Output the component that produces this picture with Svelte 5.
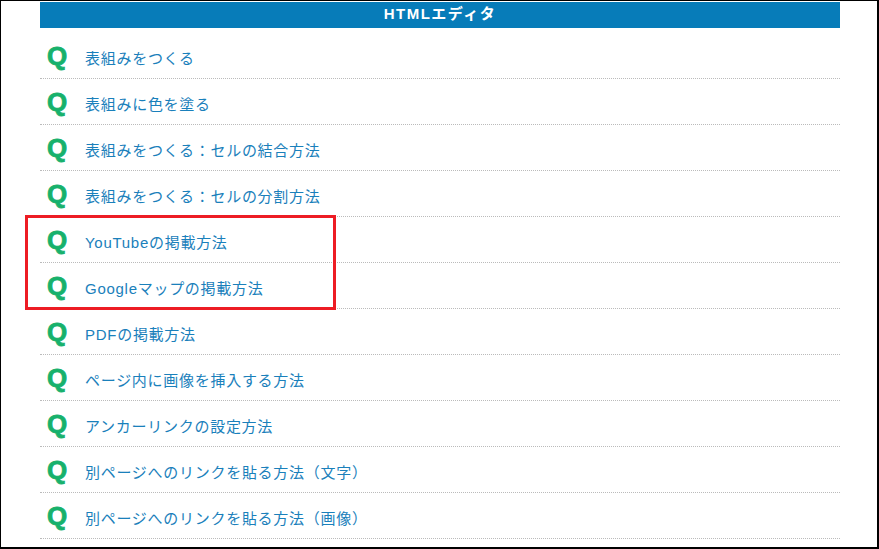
<script lang="ts">
	const questions = [
		'表組みをつくる',
		'表組みに色を塗る',
		'表組みをつくる：セルの結合方法',
		'表組みをつくる：セルの分割方法',
		'YouTubeの掲載方法',
		'Googleマップの掲載方法',
		'PDFの掲載方法',
		'ページ内に画像を挿入する方法',
		'アンカーリンクの設定方法',
		'別ページへのリンクを貼る方法（文字）',
		'別ページへのリンクを貼る方法（画像）',
	];
</script>

<div class="frame">
	<section class="faq">
		<h2>HTMLエディタ</h2>
		<ul>
			{#each questions as q}
				<li>
					<span class="q">Q</span>
					<a href="#top">{q}</a>
				</li>
			{/each}
		</ul>
	</section>
	<div class="highlight"></div>
</div>

<style>
	:global(body) {
		margin: 0;
		background: #fff;
	}

	.frame {
		position: relative;
		box-sizing: border-box;
		width: 879px;
		height: 549px;
		padding-top: 1px;
		border-style: solid;
		border-color: #000;
		border-width: 1px 2px 2px 1px;
		overflow: hidden;
		font-family: "Liberation Sans", "Noto Sans CJK JP", sans-serif;
	}

	.faq {
		width: 800px;
		margin-left: 39px;
	}

	h2 {
		margin: 0;
		height: 26px;
		line-height: 24px;
		background: #077cb9;
		color: #fff;
		font-size: 15px;
		font-weight: 700;
		letter-spacing: 1.5px;
		text-align: center;
	}

	ul {
		margin: 0;
		padding: 5px 0 0;
		list-style: none;
	}

	li {
		box-sizing: border-box;
		display: flex;
		align-items: center;
		height: 46px;
		border-bottom: 1px dotted #bbb;
	}

	.q {
		box-sizing: border-box;
		width: 45px;
		padding: 1px 0 0 7px;
		font-size: 26px;
		font-weight: 700;
		line-height: 1;
		color: #17b16c;
		-webkit-text-stroke: 0.8px #17b16c;
	}

	a {
		padding-top: 3px;
		color: #1a80bb;
		font-size: 15px;
		letter-spacing: 0.72px;
		text-decoration: none;
	}

	.highlight {
		position: absolute;
		left: 24px;
		top: 214px;
		width: 305px;
		height: 89px;
		border: 3px solid #ed1c24;
	}
</style>
